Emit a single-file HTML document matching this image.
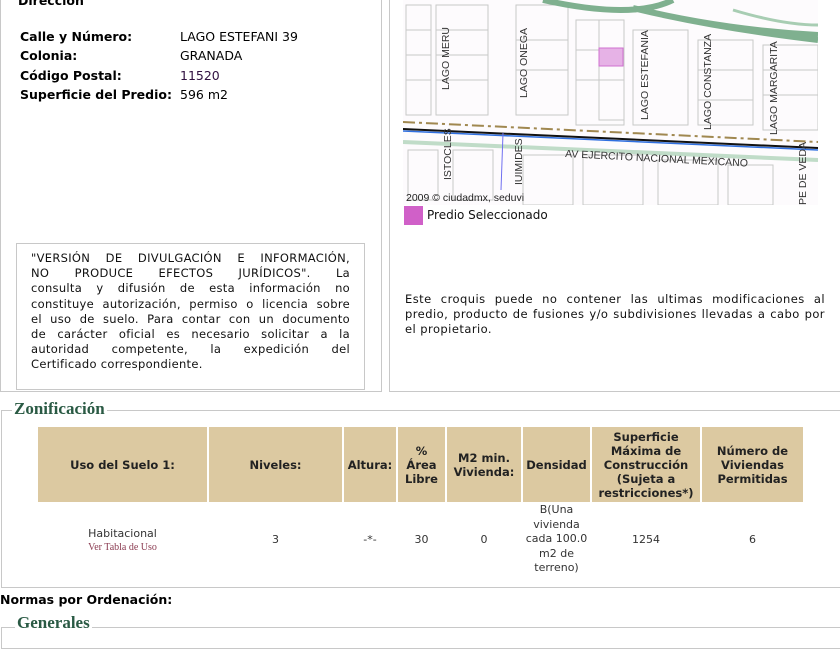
<!DOCTYPE html>
<html><head><meta charset="utf-8"><style>
body{margin:0;width:840px;height:630px;overflow:hidden;background:#fff;font-family:"DejaVu Sans",Verdana,sans-serif;font-size:12px;color:#000;position:relative}
.abs{position:absolute}
.box{position:absolute;border:1px solid #c8c8c8}
.lab{position:absolute;left:20px;font-weight:bold;font-size:12.5px}
.val{position:absolute;left:180px;font-size:12.5px}
th{background:#dcc9a1;font-size:11.5px;font-weight:bold;padding:0;text-align:center;color:#222}
td{text-align:center;font-size:11px;color:#333;padding:0}
.j{text-align:justify;text-align-last:justify;display:block;white-space:nowrap}
</style></head><body>
<div class="box" style="left:0;top:-5px;width:380px;height:395px"></div>
<div class="box" style="left:389px;top:-5px;width:452px;height:395px"></div>
<div class="abs" style="left:18px;top:-7px;font-weight:bold;font-size:12.5px">Dirección</div>
<div class="lab" style="top:29px">Calle y Número:</div><div class="val" style="top:29px">LAGO ESTEFANI 39</div>
<div class="lab" style="top:48px">Colonia:</div><div class="val" style="top:48px">GRANADA</div>
<div class="lab" style="top:68px">Código Postal:</div><div class="val" style="top:68px;color:#301040">11520</div>
<div class="lab" style="top:87px">Superficie del Predio:</div><div class="val" style="top:87px">596 m2</div>
<div class="box" style="left:16px;top:243px;width:347px;height:145px"></div>
<div class="abs" style="left:31px;top:251px;width:319px;text-align:justify;font-size:11.5px;letter-spacing:0.3px;line-height:15.2px;color:#111"><span class="j">"VERSIÓN DE DIVULGACIÓN E INFORMACIÓN,</span><span class="j">NO PRODUCE EFECTOS JURÍDICOS". La</span><span class="j">consulta y difusión de esta información no</span><span class="j">constituye autorización, permiso o licencia sobre</span><span class="j">el uso de suelo. Para contar con un documento</span><span class="j">de carácter oficial es necesario solicitar a la</span><span class="j">autoridad competente, la expedición del</span>Certificado correspondiente.</div>
<svg class="abs" style="left:403px;top:0" width="415" height="205" viewBox="0 0 415 205">
<rect width="415" height="205" fill="#fdfbfd"/>
<g fill="none" stroke="#c8c8c8" stroke-width="1">
<rect x="3" y="5" width="25" height="110"/><rect x="33" y="5" width="52" height="110"/><rect x="113" y="5" width="52" height="110"/>
<rect x="173" y="20" width="48" height="105"/><rect x="196" y="20" width="25" height="100"/><rect x="230" y="30" width="55" height="95"/>
<rect x="295" y="40" width="55" height="85"/><rect x="360" y="45" width="55" height="85"/>
<path d="M3 30H28M3 55H28M3 80H28M33 30H85M33 55H85M33 80H85M113 40H165M113 70H165M173 50H221M173 80H221M360 70H415M360 95H415M295 70H350M295 100H350"/>
<rect x="5" y="150" width="30" height="50"/><rect x="50" y="150" width="40" height="50"/><rect x="120" y="155" width="50" height="50"/><rect x="180" y="155" width="60" height="50"/><rect x="255" y="160" width="60" height="45"/><rect x="325" y="165" width="45" height="40"/>
</g>
<path d="M140 0 Q 230 20 270 0 M230 8 Q 320 30 415 35 M260 15 Q 330 30 415 40" stroke="#7fb08f" stroke-width="6" fill="none"/>
<path d="M330 10 Q 380 25 415 25" stroke="#a8cdb3" stroke-width="3" fill="none"/>
<rect x="196" y="48" width="24" height="18" fill="#e6b2e6" stroke="#d070d0"/>
<path d="M0 122 L415 142" stroke="#a08850" stroke-width="2" stroke-dasharray="12 4 3 4" fill="none"/>
<path d="M0 129 L415 148" stroke="#111" stroke-width="2" fill="none"/>
<path d="M0 131 L415 150" stroke="#3070e0" stroke-width="1.5" fill="none"/>
<path d="M0 142 L415 160" stroke="#c0dcc8" stroke-width="4" fill="none"/>
<line x1="100" y1="133" x2="98" y2="190" stroke="#7070f0"/>
<g font-family="Liberation Sans,sans-serif" font-size="10.5" fill="#333">
<text transform="translate(46,90) rotate(-90)">LAGO MERU</text>
<text transform="translate(124,98) rotate(-90)">LAGO ONEGA</text>
<text transform="translate(245,120) rotate(-90)">LAGO ESTEFANIA</text>
<text transform="translate(308,130) rotate(-90)">LAGO CONSTANZA</text>
<text transform="translate(374,135) rotate(-90)">LAGO MARGARITA</text>
<text transform="translate(48,180) rotate(-90)">ISTOCLES</text>
<text transform="translate(119,185) rotate(-90)">IUIMIDES</text>
<text transform="translate(403,205) rotate(-90)">PE DE VEDA</text>
<text x="162" y="157" transform="rotate(3 162 157)">AV EJERCITO NACIONAL MEXICANO</text>
<text x="3" y="201" fill="#222">2009 © ciudadmx, seduvi</text>
</g>
</svg>
<div class="abs" style="left:404px;top:206px;width:19px;height:19px;background:#d060c8"></div>
<div class="abs" style="left:427px;top:208px;font-size:12px;color:#111">Predio Seleccionado</div>
<div class="abs" style="left:405px;top:292px;width:420px;text-align:justify;font-size:11.5px;letter-spacing:0.45px;line-height:15.2px;color:#111">Este croquis puede no contener las ultimas modificaciones al predio, producto de fusiones y/o subdivisiones llevadas a cabo por el propietario.</div>
<div class="box" style="left:1px;top:410px;width:838px;height:176px"></div>
<div class="abs" style="left:12px;top:399px;background:#fff;padding:0 2px;font-family:'Liberation Serif',serif;font-weight:bold;font-size:17px;color:#2a5a44">Zonificación</div>
<table class="abs" style="left:36px;top:427px;width:769px;table-layout:fixed;border-collapse:separate;border-spacing:2px 0">
<colgroup><col style="width:169px"><col style="width:133px"><col style="width:52px"><col style="width:47px"><col style="width:74px"><col style="width:67px"><col style="width:108px"><col style="width:101px"></colgroup>
<tr style="height:75px"><th>Uso del Suelo 1:</th><th>Niveles:</th><th>Altura:</th><th>%<br>Área<br>Libre</th><th>M2 min.<br>Vivienda:</th><th>Densidad</th><th>Superficie<br>Máxima de<br>Construcción<br>(Sujeta a<br>restricciones*)</th><th>Número de<br>Viviendas<br>Permitidas</th></tr>
<tr style="height:75px"><td>Habitacional<br><span style="font-family:'Liberation Serif',serif;font-size:10px;color:#8a3a50">Ver Tabla de Uso</span></td><td>3</td><td>-*-</td><td>30</td><td>0</td><td style="line-height:14.5px">B(Una vivienda cada 100.0 m2 de terreno)</td><td>1254</td><td>6</td></tr>
</table>
<div class="abs" style="left:0;top:592px;font-weight:bold;font-size:12.5px">Normas por Ordenación:</div>
<div class="box" style="left:1px;top:627px;width:838px;height:20px"></div>
<div class="abs" style="left:15px;top:613px;background:#fff;padding:0 2px;font-family:'Liberation Serif',serif;font-weight:bold;font-size:17px;color:#2a5a44">Generales</div>
</body></html>
